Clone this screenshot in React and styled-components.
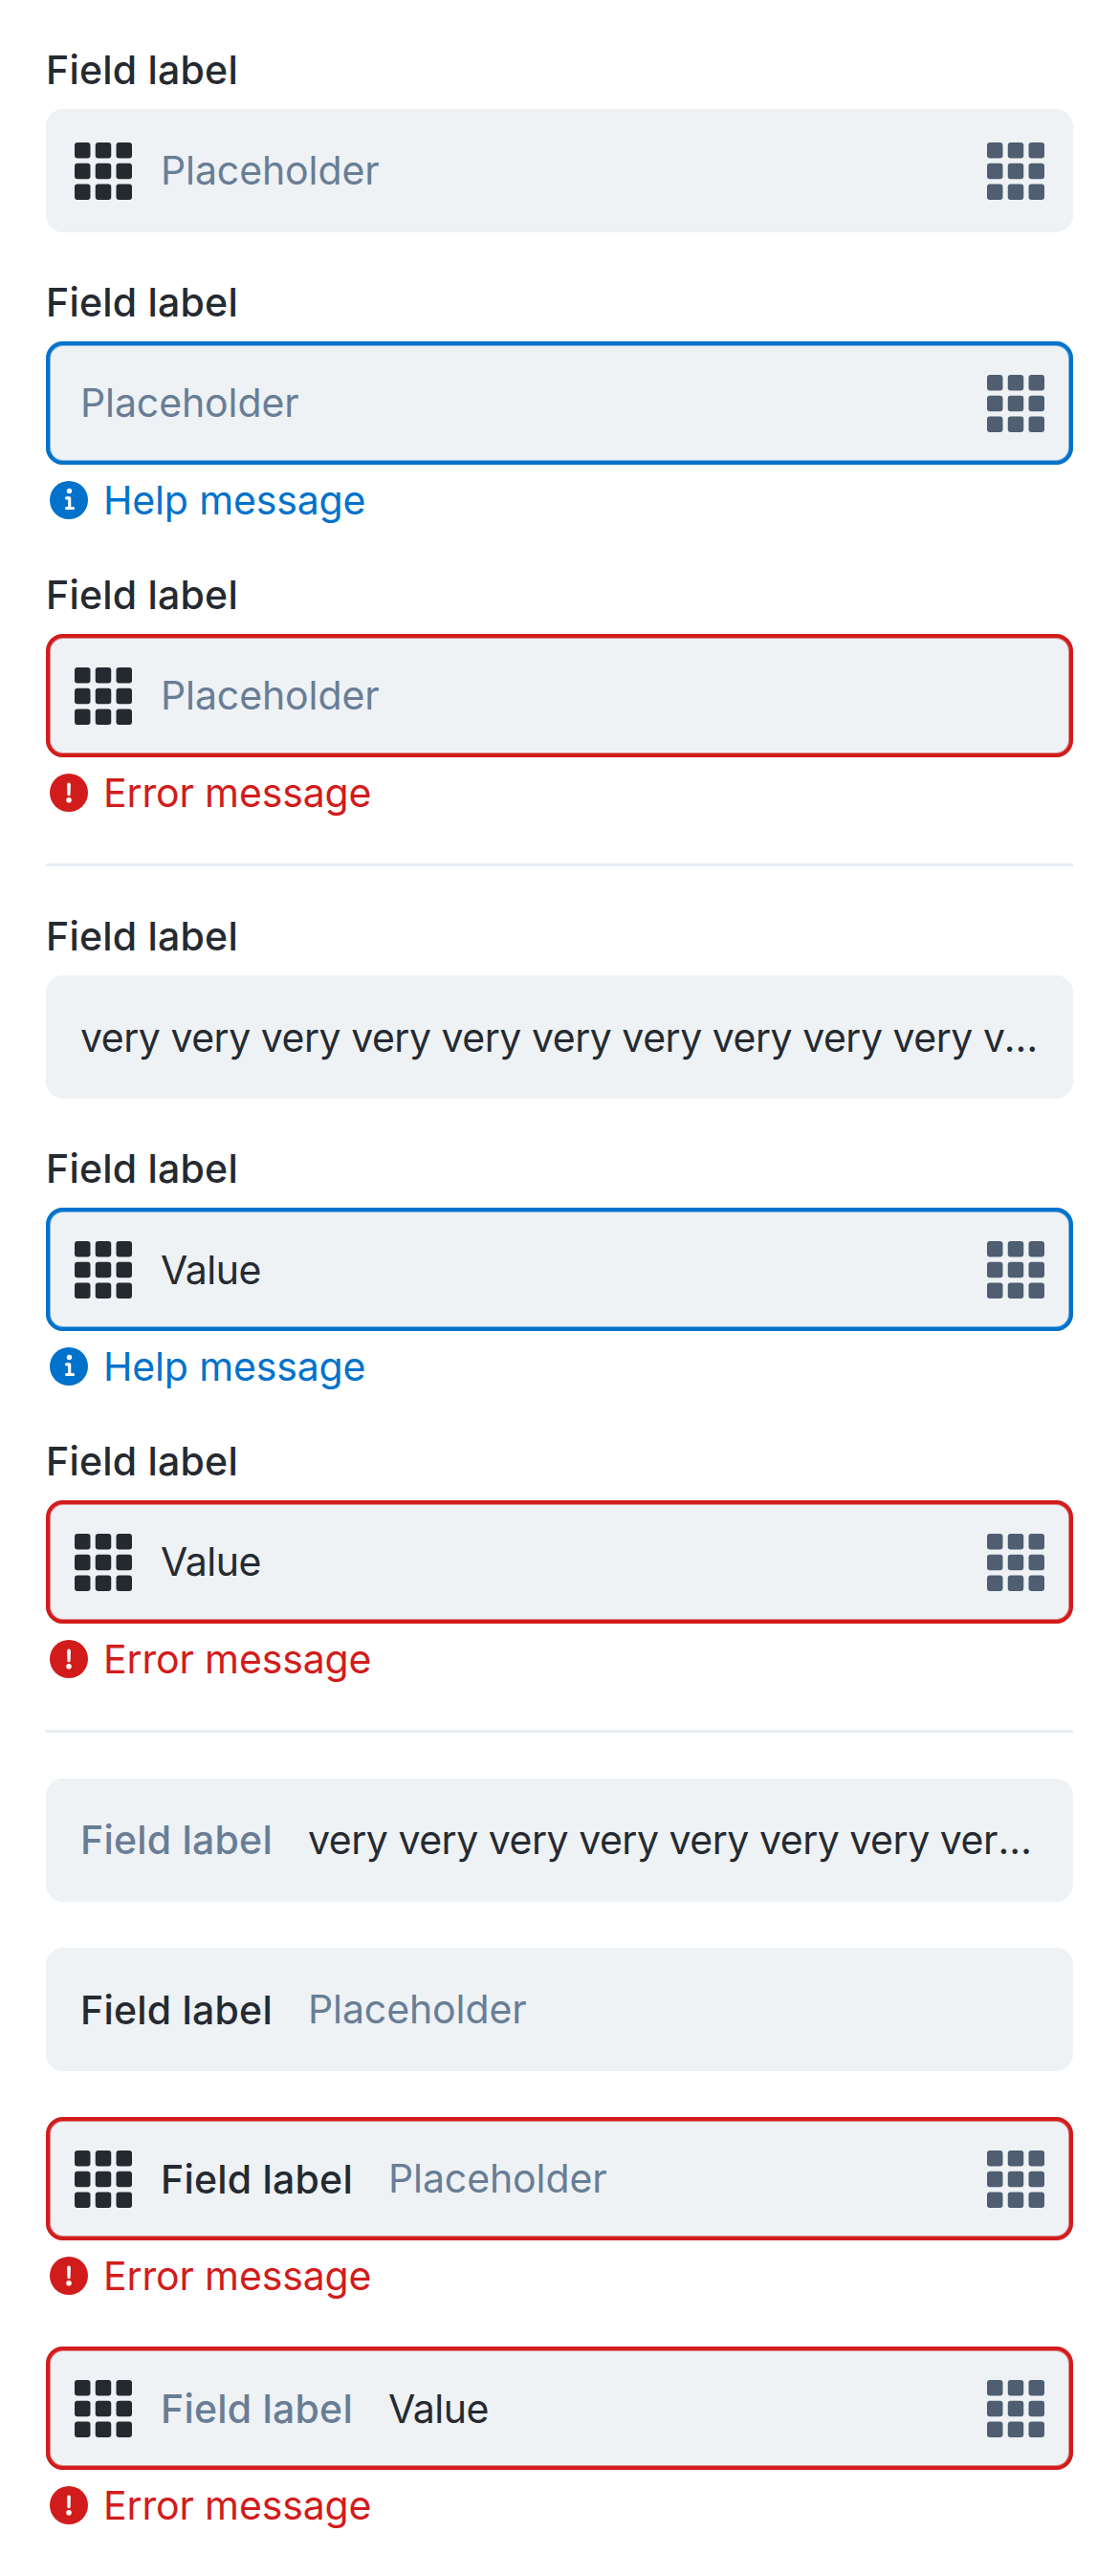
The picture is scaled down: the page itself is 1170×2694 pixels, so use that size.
import React from "react";
import styled, { createGlobalStyle } from "styled-components";

const color = {
  ink: "#252a31",
  inkNormal: "#4f5e71",
  inkLight: "#697d95",
  cloud: "#eef2f5",
  divider: "#e8edf1",
  help: "#0172cb",
  error: "#d21c1c",
};

const GlobalStyle = createGlobalStyle`
  body {
    margin: 0;
    background: #ffffff;
    font-family: Inter, "Noto Sans", sans-serif;
    font-size: 41px;
    line-height: 50px;
    color: ${color.ink};
  }
`;

const Page = styled.main`
  box-sizing: border-box;
  width: 1170px;
  min-height: 2694px;
  padding: 48px;
  display: flex;
  flex-direction: column;
  gap: 48px;
`;

const Divider = styled.hr`
  width: 100%;
  height: 3px;
  margin: 0;
  border: 0;
  background: ${color.divider};
`;

const FieldRoot = styled.div`
  display: flex;
  flex-direction: column;
`;

const TopLabel = styled.div`
  margin-bottom: 16px;
  font-weight: 500;
  letter-spacing: 0.22px;
`;

const Box = styled.div`
  box-sizing: border-box;
  height: 129px;
  padding: 0 ${(p) => (p.$suffix ? 24 : 30)}px 0 ${(p) => (p.$prefix ? 24 : 36)}px;
  display: flex;
  align-items: flex-start;
  border-radius: 18px;
  background: ${color.cloud};
  box-shadow: ${(p) =>
    p.$outline ? `inset 0 0 0 4px ${p.$outline}, inset 0 0 0 5px ${p.$outline}80` : "none"};
`;

const IconSlot = styled.span`
  flex: none;
  display: flex;
  padding: 35px 6px 0;
  color: ${(p) => p.$tone};
`;

const Content = styled.div`
  flex: 1;
  min-width: 0;
  display: flex;
  gap: 36px;
  padding-top: ${(p) => (p.$lowered ? 40 : 39)}px;
  padding-left: ${(p) => (p.$prefix ? 24 : 0)}px;
`;

const InlineLabel = styled.span`
  flex: none;
  margin-right: 1px;
  padding-top: ${(p) => (p.$filled ? 0 : 1)}px;
  font-weight: 500;
  letter-spacing: 0.22px;
  color: ${(p) => (p.$filled ? color.inkLight : color.ink)};
`;

const Value = styled.span`
  min-width: 0;
  overflow: hidden;
  text-overflow: ellipsis;
  white-space: nowrap;
  letter-spacing: -0.48px;
`;

const Placeholder = styled.span`
  white-space: nowrap;
  letter-spacing: -0.1px;
  color: ${color.inkLight};
`;

const Message = styled.div`
  height: 51px;
  padding-top: 12px;
  display: flex;
  gap: 12px;
  letter-spacing: -0.15px;
  color: ${(p) => p.$tone};
`;

const MessageIcon = styled.svg`
  flex: none;
  width: 40px;
  height: 40px;
  margin: 5px 4px 0;
`;

const GridIcon = () => (
  <svg width="60" height="60" viewBox="0 0 60 60" fill="currentColor">
    {[0, 21.75, 43.5].map((y) =>
      [0, 21.75, 43.5].map((x) => (
        <rect key={`${x}-${y}`} x={x} y={y} width="16.5" height="16.5" rx="3" />
      ))
    )}
  </svg>
);

const InfoIcon = () => (
  <MessageIcon viewBox="0 0 40 40">
    <circle cx="20" cy="20" r="20" fill="currentColor" />
    <circle cx="20.5" cy="10.5" r="2.7" fill="#fff" />
    <path
      d="M17.5 17.9H20.7V28.5M17.5 28.5H24.6"
      fill="none"
      stroke="#fff"
      strokeWidth="3.1"
      strokeLinecap="round"
      strokeLinejoin="round"
    />
  </MessageIcon>
);

const AlertIcon = () => (
  <MessageIcon viewBox="0 0 40 40">
    <circle cx="20" cy="20" r="20" fill="currentColor" />
    <path
      d="M18.1 11.5a1.9 1.9 0 0 1 3.8 0l-.3 10.2a1.6 1.6 0 0 1-3.2 0z"
      fill="#fff"
    />
    <circle cx="20" cy="27.8" r="2.8" fill="#fff" />
  </MessageIcon>
);

function InputField({ label, inline, value, placeholder, prefix, suffix, help, error, lowered }) {
  const outline = error ? color.error : help ? color.help : null;
  return (
    <FieldRoot>
      {!inline && <TopLabel>{label}</TopLabel>}
      <Box $outline={outline} $prefix={prefix} $suffix={suffix}>
        {prefix && (
          <IconSlot $tone={color.ink}>
            <GridIcon />
          </IconSlot>
        )}
        <Content $prefix={prefix} $lowered={lowered}>
          {inline && <InlineLabel $filled={Boolean(value)}>{label}</InlineLabel>}
          {value ? <Value>{value}</Value> : <Placeholder>{placeholder}</Placeholder>}
        </Content>
        {suffix && (
          <IconSlot $tone={color.inkNormal}>
            <GridIcon />
          </IconSlot>
        )}
      </Box>
      {outline && (
        <Message $tone={outline}>
          {error ? <AlertIcon /> : <InfoIcon />}
          <span>{error || help}</span>
        </Message>
      )}
    </FieldRoot>
  );
}

const label = "Field label";
const placeholder = "Placeholder";
const longValue = "very very very very very very very very very very very very long value";

export default function App() {
  return (
    <>
      <GlobalStyle />
      <Page>
        <InputField label={label} placeholder={placeholder} prefix suffix />
        <InputField label={label} placeholder={placeholder} suffix help="Help message" />
        <InputField label={label} placeholder={placeholder} prefix error="Error message" />
        <Divider />
        <InputField label={label} value={longValue} lowered />
        <InputField label={label} value="Value" prefix suffix lowered help="Help message" />
        <InputField label={label} value="Value" prefix suffix error="Error message" />
        <Divider />
        <InputField inline label={label} value={longValue} />
        <InputField inline label={label} placeholder={placeholder} />
        <InputField inline label={label} placeholder={placeholder} prefix suffix error="Error message" />
        <InputField inline label={label} value="Value" prefix suffix lowered error="Error message" />
      </Page>
    </>
  );
}
